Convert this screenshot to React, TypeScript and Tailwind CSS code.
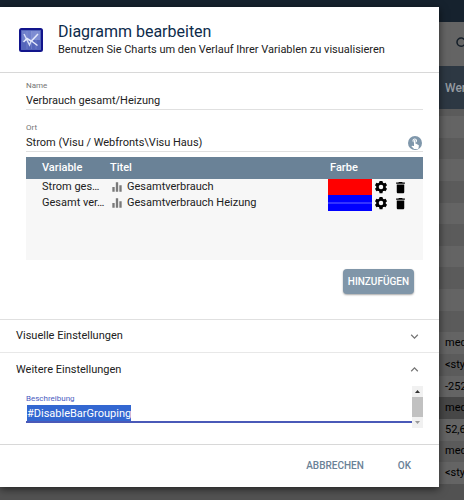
import { useEffect, useRef } from "react";
import { MdDelete, MdEqualizer, MdExpandLess, MdExpandMore, MdSearch, MdTouchApp } from "react-icons/md";

const series = [
  { variable: "Strom ges…", title: "Gesamtverbrauch", swatch: "bg-[#ff0000]" },
  { variable: "Gesamt ver…", title: "Gesamtverbrauch Heizung", swatch: "bg-[#0000ff]" },
];

const values = ["", "", "", "", "", "", "", "", "", "", "med", "<sty", "-252", "med", "52,6", "med", "<sty"];

function rowColor(index: number) {
  if (index === 13) return "bg-[#474747]";
  return index % 2 ? "bg-[#5b5b5b]" : "bg-[#646464]";
}

function ChartLogo() {
  return (
    <svg viewBox="0 0 24 24" className="h-6 w-6 shrink-0" aria-hidden="true">
      <rect x="1" y="1" width="22" height="22" rx="1.5" fill="#5566bb" stroke="#12158c" strokeWidth="2" />
      <path d="M3 3h9v9l-9 2z" fill="#6f7fcb" />
      <path d="M12 3h9v9h-9z" fill="#7d8cd2" />
      <path d="M8 3v18M12.5 3v18M17 3v18" stroke="#8c9bd8" strokeWidth="0.7" opacity="0.6" />
      <path d="M5 6l5.5 11 2-5" fill="none" stroke="#d5dcf6" strokeWidth="1.5" />
      <path d="M4.500 14l3.500-3.500 4 2.500M19 6l-6.500 7 6 4.500" fill="none" stroke="#e4e9fb" strokeWidth="1.5" />
    </svg>
  );
}

function GearIcon() {
  return (
    <svg viewBox="0 0 24 24" className="h-[14px] w-[14px]" aria-hidden="true">
      <g fill="currentColor">
        <circle cx="12" cy="12" r="8" />
        <path d="M9.500 1.500h5l1 5h-7z" />
        <path d="M9.500 1.500h5l1 5h-7z" transform="rotate(60 12 12)" />
        <path d="M9.500 1.500h5l1 5h-7z" transform="rotate(120 12 12)" />
        <path d="M9.500 1.500h5l1 5h-7z" transform="rotate(180 12 12)" />
        <path d="M9.500 1.500h5l1 5h-7z" transform="rotate(240 12 12)" />
        <path d="M9.500 1.500h5l1 5h-7z" transform="rotate(300 12 12)" />
      </g>
      <circle cx="12" cy="12" r="3.9" fill="#f7f7f7" />
    </svg>
  );
}

function Background() {
  return (
    <div className="flex min-h-screen flex-col bg-[#525252]">
      <div className="h-[22px] bg-[#16222e]" />
      <div className="flex h-11 items-center justify-end bg-[#646464]">
        <button type="button" aria-label="Suchen" className="-mr-2 text-[#141e28]">
          <MdSearch size={18} />
        </button>
      </div>
      <table className="w-full table-fixed text-left text-[11px] leading-4">
        <thead>
          <tr className="h-[43px] bg-[#2d3843] text-[#959ba1]">
            <th className="p-0">
              <div className="ml-auto w-[19px] text-xs font-medium">Wer</div>
            </th>
          </tr>
        </thead>
      </table>
      <div className="h-[7px] bg-[#5b5b5b]" />
      <table className="h-[368px] w-full table-fixed text-[11px] leading-4">
        <tbody>
          {values.map((value, i) => (
            <tr key={i} className={rowColor(i)}>
              <td className="p-0 text-black">
                <div className="ml-auto h-4 w-[19px] whitespace-nowrap">{value}</div>
              </td>
            </tr>
          ))}
        </tbody>
      </table>
    </div>
  );
}

function SeriesTable() {
  return (
    <div className="mt-[5px] h-[103px] bg-[#f7f7f7]">
      <table className="w-full table-fixed text-left text-[11px] leading-4 text-[#212121]">
        <thead>
          <tr className="h-[22px] bg-[#6a8297] text-white">
            <th className="w-[84px] p-0 pl-4 font-medium">Variable</th>
            <th className="p-0 font-medium">Titel</th>
            <th className="w-11 p-0 pl-[2px] font-medium">Farbe</th>
            <th className="w-[51px] p-0" aria-label="Aktionen" />
          </tr>
        </thead>
        <tbody>
          {series.map((s) => (
            <tr key={s.title} className="h-4">
              <td className="p-0 pl-4 whitespace-nowrap">{s.variable}</td>
              <td className="p-0">
                <div className="flex items-center gap-[3px]">
                  <MdEqualizer size={14} className="text-[#7a7a7a]" />
                  {s.title}
                </div>
              </td>
              <td className="p-0">
                <div className={`flex h-4 items-center ${s.swatch}`}>
                  {s.swatch === "bg-[#0000ff]" && <div className="h-0.5 w-full bg-[#3333ff]" />}
                </div>
              </td>
              <td className="p-0">
                <div className="flex items-center gap-[5px] pl-0.5 text-black">
                  <button type="button" aria-label="Einstellungen"><GearIcon /></button>
                  <button type="button" aria-label="Löschen"><MdDelete size={15} /></button>
                </div>
              </td>
            </tr>
          ))}
        </tbody>
      </table>
    </div>
  );
}

export default function App() {
  const description = useRef<HTMLTextAreaElement>(null);

  useEffect(() => {
    description.current?.focus();
    description.current?.select();
  }, []);

  return (
    <div className="relative min-h-screen overflow-hidden font-['Roboto',sans-serif]">
      <Background />

      <div role="dialog" aria-labelledby="dialog-title" className="absolute inset-x-0 top-[7px] mr-[25px] bg-white text-[11px] leading-4 text-[#212121] shadow-[0_2px_8px_rgba(0,0,0,0.6)]">
        <header className="flex h-[66px] items-center gap-[15px] border-b border-[#d8d8d8] pl-[19px]">
          <ChartLogo />
          <div>
            <h1 id="dialog-title" className="text-base leading-5 text-[#0d2b4b]">Diagramm bearbeiten</h1>
            <p>Benutzen Sie Charts um den Verlauf Ihrer Variablen zu visualisieren</p>
          </div>
        </header>

        <section className="h-[247px] border-b border-[#e0e0e0] pt-[7px] pr-4 pl-[26px]">
          <label htmlFor="name" className="block text-[8px] leading-3 text-[#757575]">Name</label>
          <input id="name" defaultValue="Verbrauch gesamt/Heizung" className="block h-[18px] w-full border-b border-[#e0e0e0] outline-none" />

          <label htmlFor="place" className="mt-3 block text-[8px] leading-3 text-[#757575]">Ort</label>
          <div className="flex h-[18px] items-center border-b border-[#e0e0e0]">
            <input id="place" defaultValue="Strom (Visu / Webfronts\Visu Haus)" className="min-w-0 flex-1 outline-none" />
            <button type="button" aria-label="Ort wählen" className="mr-px flex h-[14px] w-[14px] items-center justify-center rounded-full bg-[#7f97ab] text-white">
              <MdTouchApp size={12} />
            </button>
          </div>

          <SeriesTable />

          <div className="mt-[9px] flex justify-end pr-[9px]">
            <button type="button" className="h-[25px] rounded-sm bg-[#8096a9] px-[5px] text-[10px] font-medium text-white shadow-[0_1px_2px_rgba(0,0,0,0.35)]">HINZUFÜGEN</button>
          </div>
        </section>

        <button type="button" className="flex h-[33px] w-full items-center justify-between border-b border-[#e8e8e8] pr-[17px] pl-4">
          Visuelle Einstellungen
          <MdExpandMore size={15} className="text-[#757575]" />
        </button>

        <section className="h-[92px] border-b border-[#d8d8d8]">
          <button type="button" aria-expanded="true" className="flex h-[33px] w-full items-center justify-between pr-[17px] pl-4">
            Weitere Einstellungen
            <MdExpandLess size={15} className="text-[#757575]" />
          </button>
          <div className="flex pr-4 pl-[26px]">
            <div className="min-w-0 flex-1 pt-[7px]">
              <label htmlFor="description" className="block text-[8px] leading-3 text-[#4a5cc0]">Beschreibung</label>
              <textarea
                id="description"
                ref={description}
                rows={1}
                defaultValue="#DisableBarGrouping"
                className="block h-[18px] w-full resize-none overflow-hidden border-b-2 border-[#4a59b8] pl-px leading-[17px] outline-none selection:bg-[#3367d1] selection:text-white"
              />
            </div>
            <div className="flex h-[42px] w-[11px] flex-col bg-[#f1f1f1]">
              <svg viewBox="0 0 11 11" className="h-[11px]" aria-hidden="true"><path d="M3 7l2.500-3L8 7z" fill="#333" /></svg>
              <div className="h-5 bg-[#c1c1c1]" />
              <svg viewBox="0 0 11 11" className="h-[11px]" aria-hidden="true"><path d="M3 4l2.500 3L8 4z" fill="#999" /></svg>
            </div>
          </div>
        </section>

        <footer className="flex h-[42px] items-center justify-end gap-[34px] pr-7 text-[10px] font-medium text-[#6a8297]">
          <button type="button">ABBRECHEN</button>
          <button type="button">OK</button>
        </footer>
      </div>
    </div>
  );
}
